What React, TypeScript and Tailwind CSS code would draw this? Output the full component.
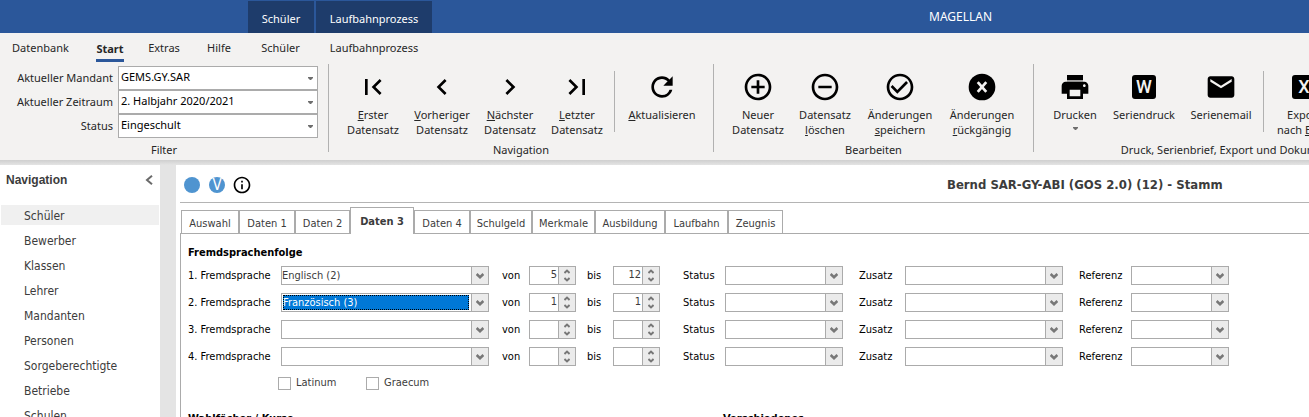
import React from "react";
import {
  MdFirstPage,
  MdChevronLeft,
  MdChevronRight,
  MdLastPage,
  MdRefresh,
  MdAddCircleOutline,
  MdRemoveCircleOutline,
  MdCheckCircleOutline,
  MdEmail,
  MdInfoOutline,
} from "react-icons/md";

const filters = [
  { id: "mandant", label: "Aktueller Mandant", value: "GEMS.GY.SAR" },
  { id: "zeitraum", label: "Aktueller Zeitraum", value: "2. Halbjahr 2020/2021" },
  { id: "filter-status", label: "Status", value: "Eingeschult" },
];

const navItems = ["Schüler", "Bewerber", "Klassen", "Lehrer", "Mandanten", "Personen", "Sorgeberechtigte", "Betriebe", "Schulen"];

const tabs = [
  { label: "Auswahl", width: "w-[58px]" },
  { label: "Daten 1", width: "w-[56px]" },
  { label: "Daten 2", width: "w-[55px]" },
  { label: "Daten 3", width: "w-[64px]" },
  { label: "Daten 4", width: "w-[56px]" },
  { label: "Schulgeld", width: "w-[62px]" },
  { label: "Merkmale", width: "w-[63px]" },
  { label: "Ausbildung", width: "w-[70px]" },
  { label: "Laufbahn", width: "w-[63px]" },
  { label: "Zeugnis", width: "w-[55px]" },
];

const languages = [
  { value: "Englisch (2)", from: "5", to: "12" },
  { value: "Französisch (3)", from: "1", to: "1", focused: true },
  { value: "", from: "", to: "" },
  { value: "", from: "", to: "" },
];

function Caret() {
  return (
    <svg width="5" height="3" viewBox="0 0 5 3" className="fill-[#6e6e6e]" aria-hidden="true">
      <path d="M0 0h5v1L3 3H2L0 1z" />
    </svg>
  );
}

function Chevron({ up = false, small = false }: { up?: boolean; small?: boolean }) {
  return (
    <svg
      width={small ? 6 : 8}
      height={small ? 5 : 6}
      viewBox="0 0 8 6"
      fill="none"
      stroke="#777"
      strokeWidth="2.6"
      className={up ? "rotate-180" : ""}
      aria-hidden="true"
    >
      <path d="M.6 1 4 4.200 7.400 1" />
    </svg>
  );
}

function PrinterIcon() {
  return (
    <svg width="32" height="32" viewBox="0 0 24 24" aria-hidden="true">
      <path d="M6 3h12v4H6z" />
      <path d="M6 7h12v1H6z" fill="#a5a5a5" />
      <path d="M19 8H5c-1.660 0-3 1.340-3 3v6h4v4h12v-4h4v-6c0-1.660-1.340-3-3-3zm-3 11H8v-5h8v5zm3-7c-.55 0-1-.45-1-1s.45-1 1-1 1 .45 1 1-.45 1-1 1z" />
    </svg>
  );
}

function CancelIcon() {
  return (
    <svg width="32" height="32" viewBox="0 0 24 24" aria-hidden="true">
      <circle cx="12" cy="12" r="10" />
      <path d="M8.800 8.300l6.400 7.400M15.200 8.300l-6.400 7.400" stroke="#f3f2f1" strokeWidth="2" />
    </svg>
  );
}

function LetterBox({ letter }: { letter: string }) {
  return (
    <span className="flex size-6 items-center justify-center rounded-[3px] bg-black font-['Roboto',sans-serif] text-[18px] leading-none font-medium text-[#f3f2f1]">
      {letter}
    </span>
  );
}

function RibbonButton({ icon, width, children }: { icon: React.ReactNode; width: string; children: React.ReactNode }) {
  return (
    <button type="button" className={`flex shrink-0 flex-col items-center ${width}`}>
      <span className="flex h-8 items-center text-[32px] text-black">{icon}</span>
      <span className="mt-1 text-center leading-[15px] whitespace-nowrap">{children}</span>
    </button>
  );
}

function RibbonGroup({ title, width, children }: { title: string; width: string; children: React.ReactNode }) {
  return (
    <section className={`flex h-[88px] shrink-0 flex-col border-l border-[#b1b1b1] ${width}`}>
      <div className="flex h-[78px] shrink-0 items-start pt-[7px]">{children}</div>
      <h2 className="h-4 text-center leading-4 whitespace-nowrap">{title}</h2>
    </section>
  );
}

function RibbonDivider() {
  return <span className="h-[61px] w-px shrink-0 bg-[#b1b1b1]" />;
}

function Combo({ id, value = "", focused = false }: { id: string; value?: string; focused?: boolean }) {
  return (
    <div className="grid h-[19px] grid-rows-[minmax(0,1fr)] border border-[#ababab] bg-white">
      <select
        id={id}
        defaultValue={value}
        className={
          focused
            ? "col-start-1 row-start-1 m-px mr-[19px] min-h-0 appearance-none bg-[#0078d7] leading-[14px] text-white outline-1 -outline-offset-1 outline-dotted outline-black"
            : "col-start-1 row-start-1 mr-[18px] min-h-0 appearance-none leading-4 outline-none"
        }
      >
        <option>{value}</option>
      </select>
      <span className="pointer-events-none col-start-1 row-start-1 flex w-[17px] items-center justify-center justify-self-end border-l border-[#ababab] bg-[#ebebeb]">
        <Chevron />
      </span>
    </div>
  );
}

function Spin({ id, value }: { id: string; value: string }) {
  return (
    <div className="flex h-[19px] border border-[#ababab] bg-white">
      <input id={id} defaultValue={value} inputMode="numeric" className="min-w-0 flex-1 pr-px text-right outline-none" />
      <span className="flex w-[17px] flex-col border-l border-[#ababab] bg-[#ebebeb]">
        <button type="button" aria-label="Erhöhen" className="flex flex-1 items-center justify-center">
          <Chevron up small />
        </button>
        <button type="button" aria-label="Verringern" className="flex flex-1 items-center justify-center">
          <Chevron small />
        </button>
      </span>
    </div>
  );
}

export default function App() {
  return (
    <div className="flex h-screen flex-col overflow-hidden bg-[#e4e4e4] font-['Noto_Sans',sans-serif] text-[11px] text-[#262626]">
      <header className="flex h-[33px] shrink-0 items-stretch bg-[#2b579a] pt-px pl-[248px] text-white">
        <div className="flex gap-0.5">
          <button type="button" className="w-[66px] bg-[#1e3c6b] pt-1">Schüler</button>
          <button type="button" className="w-[116px] bg-[#1e3c6b] pt-1">Laufbahnprozess</button>
        </div>
        <h1 className="flex flex-1 items-center pl-[497px] text-[12px]">MAGELLAN</h1>
      </header>

      <nav className="flex h-[31px] shrink-0 items-center bg-[#f3f2f1]">
        <button type="button" className="w-[81px]">Datenbank</button>
        <button type="button" className="flex w-[58px] justify-center self-end pb-0.5">
          <span className="border-b-3 border-[#2b579a] pb-0.5 font-bold">Start</span>
        </button>
        <button type="button" className="w-[50px]">Extras</button>
        <button type="button" className="w-[60px]">Hilfe</button>
        <button type="button" className="w-[63px]">Schüler</button>
        <button type="button" className="w-[124px]">Laufbahnprozess</button>
      </nav>

      <div className="flex h-24 shrink-0 overflow-hidden bg-[#f3f2f1]">
        <section className="w-[328px] shrink-0">
          <div className="h-[78px] pt-0.5">
            {filters.map((f) => (
              <div key={f.id} className="flex h-6 items-center">
                <label htmlFor={f.id} className="w-[113px] text-right whitespace-nowrap">{f.label}</label>
                <div className="ml-[5px] grid h-6 w-[200px] border border-[#ababab] bg-white">
                  <select
                    id={f.id}
                    className="col-start-1 row-start-1 appearance-none pb-0.5 pl-0.5 text-black outline-none"
                  >
                    <option>{f.value}</option>
                  </select>
                  <span className="pointer-events-none col-start-1 row-start-1 mr-1 self-center justify-self-end">
                    <Caret />
                  </span>
                </div>
              </div>
            ))}
          </div>
          <h2 className="h-4 text-center leading-4">Filter</h2>
        </section>

        <RibbonGroup title="Navigation" width="w-[385px]">
          <RibbonButton icon={<MdFirstPage />} width="ml-[9px] w-[70px]"><u>E</u>rster<br />Datensatz</RibbonButton>
          <RibbonButton icon={<MdChevronLeft />} width="w-[68px]"><u>V</u>orheriger<br />Datensatz</RibbonButton>
          <RibbonButton icon={<MdChevronRight />} width="w-[68px]"><u>N</u>ächster<br />Datensatz</RibbonButton>
          <RibbonButton icon={<MdLastPage />} width="w-[66px]"><u>L</u>etzter<br />Datensatz</RibbonButton>
          <span className="w-1" />
          <RibbonDivider />
          <RibbonButton icon={<MdRefresh />} width="ml-1 w-[86px]"><u>A</u>ktualisieren</RibbonButton>
        </RibbonGroup>

        <RibbonGroup title="Bearbeiten" width="w-[320px]">
          <RibbonButton icon={<MdAddCircleOutline />} width="ml-[9px] w-[70px]">Neuer<br />Datensatz</RibbonButton>
          <RibbonButton icon={<MdRemoveCircleOutline />} width="w-[64px]">Datensatz<br /><u>l</u>öschen</RibbonButton>
          <RibbonButton icon={<MdCheckCircleOutline />} width="w-[86px]">Änderungen<br /><u>s</u>peichern</RibbonButton>
          <RibbonButton icon={<CancelIcon />} width="w-[78px]">Änderungen<br /><u>r</u>ückgängig</RibbonButton>
        </RibbonGroup>

        <RibbonGroup title="Druck, Serienbrief, Export und Dokumente" width="w-[394px]">
          <RibbonButton icon={<PrinterIcon />} width="ml-[13px] w-[56px]">
            Drucken
            <span className="flex h-[13px] items-center justify-center"><Caret /></span>
          </RibbonButton>
          <RibbonButton icon={<LetterBox letter="W" />} width="w-[82px]">Seriendruck</RibbonButton>
          <RibbonButton icon={<MdEmail />} width="w-[72px]">Serienemail</RibbonButton>
          <span className="w-1.5" />
          <RibbonDivider />
          <RibbonButton icon={<LetterBox letter="X" />} width="ml-1 w-[72px]">Export<br />nach <u>E</u>xcel</RibbonButton>
        </RibbonGroup>
      </div>

      <div className="h-[5px] shrink-0 bg-linear-to-b from-[#cfcfcf] to-[#e4e4e4]" />

      <div className="flex min-h-0 flex-1 gap-4 font-['DejaVu_Sans_Condensed','DejaVu_Sans',sans-serif] text-[11px] text-[#3c3c3c]">
        <aside className="w-40 shrink-0 overflow-hidden bg-white px-px">
          <div className="flex h-[30px] items-center justify-between pr-1.5 pl-[5px]">
            <h2 className="font-['Liberation_Sans',sans-serif] text-[12px] font-bold">Navigation</h2>
            <svg width="8" height="10" viewBox="0 0 8 10" fill="none" stroke="#6a6a6a" strokeWidth="2" aria-hidden="true">
              <path d="M7 .8 2 5l5 4.200" />
            </svg>
          </div>
          <ul className="mt-2.5 flex flex-col gap-[5px] text-[12px]">
            {navItems.map((item, i) => (
              <li key={item}>
                <a href="#" className={`block h-5 pl-[23px] leading-[22px] ${i === 0 ? "bg-[#f0f0f0]" : ""}`}>{item}</a>
              </li>
            ))}
          </ul>
        </aside>

        <main className="min-w-0 flex-1 overflow-hidden bg-white pl-1">
          <div className="flex h-[38px] items-center border-b border-[#b4b4b4] pt-[3px] pl-1">
            <div className="flex items-center gap-[9px]">
              <span className="size-4 rounded-full bg-[#4f94d0]" />
              <span className="flex size-4 items-center justify-center rounded-full bg-[#4f94d0] text-[15px] leading-none text-white">V</span>
              <MdInfoOutline className="-m-0.5 size-5 text-black" />
            </div>
            <h2 className="flex-1 pl-[697px] text-[13px] font-bold whitespace-nowrap">Bernd SAR-GY-ABI (GOS 2.0) (12) - Stamm</h2>
          </div>

          <div className="flex h-[31px] items-end border-b border-[#ababab] pl-px" role="tablist">
            {tabs.map((t, i) =>
              i === 3 ? (
                <button key={t.label} type="button" role="tab" aria-selected="true" className={`-mb-px h-[27px] border border-b-0 border-[#ababab] bg-white pt-0.5 font-bold ${t.width}`}>
                  {t.label}
                </button>
              ) : (
                <button key={t.label} type="button" role="tab" aria-selected="false" className={`h-[23px] border border-b-0 border-[#ababab] pt-1 ${t.width}`}>
                  {t.label}
                </button>
              ),
            )}
          </div>

          <div className="h-full border-l border-[#ababab] pt-[11px] pl-[7px]">
            <h3 className="h-4 leading-4 font-bold text-black">Fremdsprachenfolge</h3>
            <div className="mt-[5px] flex flex-col gap-2">
              {languages.map((l, i) => (
                <div
                  key={i}
                  className="grid grid-cols-[93px_208px_40px_47px_37px_47px_65px_118px_62px_158px_68px_98px] items-center [&>label]:pt-0.5 [&>label]:text-black"
                >
                  <label htmlFor={`sprache-${i}`}>{i + 1}. Fremdsprache</label>
                  <Combo id={`sprache-${i}`} value={l.value} focused={l.focused} />
                  <label htmlFor={`von-${i}`} className="pl-[13px]">von</label>
                  <Spin id={`von-${i}`} value={l.from} />
                  <label htmlFor={`bis-${i}`} className="pl-[11px]">bis</label>
                  <Spin id={`bis-${i}`} value={l.to} />
                  <label htmlFor={`status-${i}`} className="pl-[23px]">Status</label>
                  <Combo id={`status-${i}`} />
                  <label htmlFor={`zusatz-${i}`} className="pl-4">Zusatz</label>
                  <Combo id={`zusatz-${i}`} />
                  <label htmlFor={`referenz-${i}`} className="pl-4">Referenz</label>
                  <Combo id={`referenz-${i}`} />
                </div>
              ))}
            </div>
            <div className="mt-[11px] flex h-[13px] pl-[90px]">
              <label className="flex w-[88px] items-center gap-[5px]">
                <input type="checkbox" className="size-[13px] appearance-none border border-[#ababab] bg-white checked:bg-[#0078d7]" />
                Latinum
              </label>
              <label className="flex items-center gap-[5px]">
                <input type="checkbox" className="size-[13px] appearance-none border border-[#ababab] bg-white checked:bg-[#0078d7]" />
                Graecum
              </label>
            </div>
            <div className="mt-[21px] flex font-bold text-black">
              <h3 className="w-[535px] leading-4">Wahlfächer / Kurse</h3>
              <h3 className="leading-4">Verschiedenes</h3>
            </div>
          </div>
        </main>
      </div>
    </div>
  );
}
